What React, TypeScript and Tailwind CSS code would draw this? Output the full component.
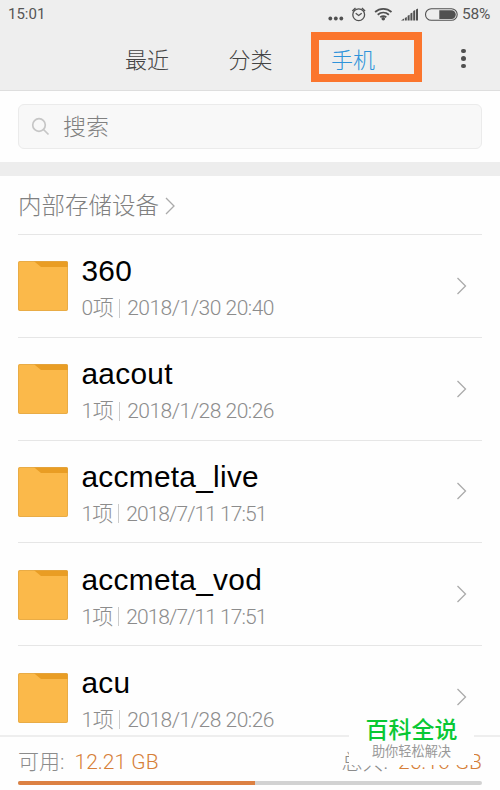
import clsx from "clsx";

type Folder = { name: string; count: string; date: string; tight?: boolean };

const folders: Folder[] = [
  { name: "360", count: "0项", date: "2018/1/30 20:40" },
  { name: "aacout", count: "1项", date: "2018/1/28 20:26" },
  { name: "accmeta_live", count: "1项", date: "2018/7/11 17:51", tight: true },
  { name: "accmeta_vod", count: "1项", date: "2018/7/11 17:51", tight: true },
  { name: "acu", count: "1项", date: "2018/1/28 20:26" },
];

const tabs = [
  { label: "最近", active: false },
  { label: "分类", active: false },
  { label: "手机", active: true },
];

export default function App() {
  return (
    <main className="relative flex h-[790px] w-[500px] flex-col overflow-hidden bg-[#fefefe] font-['Roboto','Noto_Sans_CJK_SC',sans-serif] text-[#999]">
      <header className="h-[91px] shrink-0 border-b border-[#dedede] bg-[#eee] text-[#555]">
        <StatusBar />
        <TabBar />
      </header>

      <div className="h-[71px] shrink-0 px-[18px] pt-[13px]">
        <div className="flex h-[45px] items-center rounded-md border border-[#ebebeb] bg-[#f8f8f8] pl-[12px]">
          <SearchIcon />
          <span className="mt-[2px] ml-[13px] text-[23px] leading-none font-light whitespace-nowrap text-[#808080]">搜索</span>
        </div>
      </div>

      <div className="h-[14px] shrink-0 bg-[#ededed]" />

      <section className="flex-1 overflow-hidden px-[18px]">
        <div className="flex h-[59px] items-center border-b border-[#e6e6e6] pt-[2px] text-[23.5px] font-light text-[#808080]">
          <span className="mt-[2px] whitespace-nowrap">内部存储设备</span>
          <Chevron className="ml-[6px] h-[18px] w-[10px]" />
        </div>
        {folders.map((folder) => (
          <FolderRow key={folder.name} folder={folder} />
        ))}
      </section>

      <StorageFooter />
      <Watermark />
    </main>
  );
}

function StatusBar() {
  return (
    <div className="flex h-[29px] items-center pl-[8px]">
      <span className="w-[319px] text-[15px]">15:01</span>
      <svg className="shrink-0" width="135" height="24" viewBox="0 0 135 24" fill="none" stroke="#505050">
        <g fill="#505050" stroke="none">
          <circle cx="3.3" cy="15.5" r="1.9" />
          <circle cx="8.8" cy="15.5" r="1.9" />
          <circle cx="14.3" cy="15.5" r="1.9" />
          <circle cx="56.3" cy="15.7" r="1.8" />
          <path d="M74 17.5l3-2v2zM77.8 15l2-1v3.5h-2zM80.6 12.7l2-1v5.8h-2zM83.4 10.5l2-1v8h-2zM86.2 8.1l2-1v10.4h-2zM89 6.5l2-1v12h-2z" />
          <path d="M112.3 7.3h12.2a4.3 4.3 0 0 1 0 8.6h-12.2z" />
        </g>
        <rect x="98.5" y="5.7" width="31.7" height="11.6" rx="5.8" strokeWidth="1.1" />
        <circle cx="31.7" cy="11.7" r="5.9" strokeWidth="1.3" />
        <path d="M28.7 10.3l3 2.2 3-2.2M25.3 8l3.2-3M38.1 8l-3.2-3" strokeWidth="1.3" />
        <path d="M48.1 9c4.7-4.2 11.7-4.2 16.4 0M50.7 11.8c3.3-2.8 7.900-2.8 11.200 0M53.3 14.300c1.900-1.500 4.100-1.500 6 0" strokeWidth="1.8" />
      </svg>
      <span className="text-[15.5px] tracking-[-0.2px]">58%</span>
    </div>
  );
}

function TabBar() {
  return (
    <div className="flex h-[61px] items-center pl-[105px]">
      {tabs.map((tab) => (
        <div
          key={tab.label}
          className={clsx(
            "flex items-center text-[22px] font-light whitespace-nowrap",
            tab.active
              ? "mt-[-5px] -ml-px h-[50px] w-[111px] border-8 border-[#fb752d] pt-[6px] pl-[12px] text-[#2f93da]"
              : "w-[103.5px] pt-px pl-[20px] text-[#444]"
          )}
        >
          {tab.label}
        </div>
      ))}
      <div className="mt-[-2px] ml-[39px] flex flex-col gap-[3px]">
        <i className="size-[4.5px] rounded-full bg-[#505050]" />
        <i className="size-[4.5px] rounded-full bg-[#505050]" />
        <i className="size-[4.5px] rounded-full bg-[#505050]" />
      </div>
    </div>
  );
}

function FolderRow({ folder }: { folder: Folder }) {
  return (
    <div className="flex h-[102.8px] items-center border-b border-[#e6e6e6]">
      <FolderIcon />
      <div className="ml-[13.5px] flex-1 pt-[7px] whitespace-nowrap">
        <p className="font-['Liberation_Sans',sans-serif] text-[29.8px] leading-[36px] tracking-[0.3px] text-black">
          {folder.name}
        </p>
        <p
          className={clsx(
            "mt-[2px] flex items-center text-[21px] leading-[34px] font-light text-[#8c8c8c]",
            folder.tight ? "tracking-[-0.95px]" : "tracking-[-0.5px]"
          )}
        >
          <span>{folder.count}</span>
          <span className="mr-[7px] ml-[6px] h-[19px] w-px bg-[#ccc]" />
          <span>{folder.date}</span>
        </p>
      </div>
      <Chevron className="mr-[15px] h-[18px] w-[11px]" />
    </div>
  );
}

function StorageFooter() {
  return (
    <footer className="h-[55px] shrink-0 border-t-2 border-[#eee] bg-[#fefefe] px-[18px] text-[21px] font-light text-[#8c8c8c]">
      <div className="flex h-[43.5px] items-center justify-between pt-[7px] whitespace-nowrap">
        <p>
          可用: <span className="ml-[5px] text-[#d67f38]">12.21 GB</span>
        </p>
        <p>
          总共: <span className="ml-[5px] text-[#d67f38]">25.16 GB</span>
        </p>
      </div>
      <div className="h-[4.5px] overflow-hidden rounded-full bg-[#d2d2d2]">
        <div className="h-full w-[237px] bg-[#dc8143]" />
      </div>
    </footer>
  );
}

function Watermark() {
  return (
    <div className="absolute top-[713px] left-[349px] flex h-[52px] w-[125px] flex-col items-center bg-[#fefefe] pt-[6px] whitespace-nowrap">
      <span className="text-[23px] leading-[24px] font-medium text-[#09c834]">百科全说</span>
      <span className="mt-px text-[13.2px] leading-[16px] text-[#999]">助你轻松解决</span>
    </div>
  );
}

function FolderIcon() {
  return (
    <svg className="mt-px shrink-0" width="50" height="50" viewBox="0 0 50 50">
      <rect width="50" height="50" rx="2" fill="#fbb94a" />
      <path d="M16 .3h32a2 2 0 0 1 2 2V6H23z" fill="#e99d24" />
      <rect x=".5" y=".5" width="49" height="49" rx="1.5" fill="none" stroke="#dda344" strokeOpacity=".6" />
    </svg>
  );
}

function SearchIcon() {
  return (
    <svg width="19" height="19" viewBox="0 0 19 19" fill="none" stroke="#c6c6c6" strokeWidth="1.7">
      <circle cx="8" cy="8" r="6.3" />
      <path d="M12.5 12.5l5 5" />
    </svg>
  );
}

function Chevron({ className }: { className: string }) {
  return (
    <svg className={clsx("shrink-0", className)} viewBox="0 0 10 18" fill="none" stroke="#aaa" strokeWidth="1.3">
      <path d="M1 1l8 8-8 8" />
    </svg>
  );
}
